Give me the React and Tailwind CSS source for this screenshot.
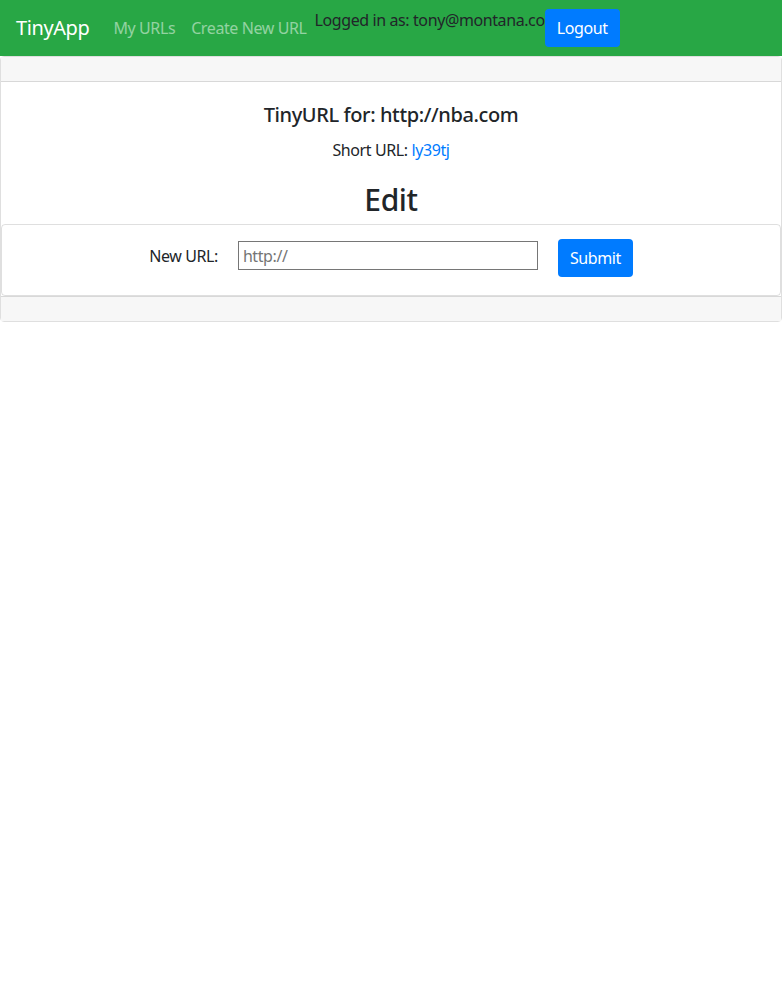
export default function App() {
  return (
    <div className="min-h-[984px] bg-white text-[16px] tracking-[-0.4px] text-[#212529] [font-family:'Noto_Sans',sans-serif]">
      <nav className="flex h-14 items-start bg-[#28a745] px-4">
        <a className="mr-4 mt-[13px] text-[20px] leading-[30px] text-white">TinyApp</a>
        <a className="mt-[16px] px-2 leading-6 text-white/50">My URLs</a>
        <a className="mt-[16px] px-2 leading-6 text-white/50">Create New URL</a>
        <span className="mt-2 leading-6">Logged in as: tony@montana.co</span>
        <button className="mt-[9px] h-[38px] rounded bg-[#007bff] px-3 leading-6 text-white">
          Logout
        </button>
      </nav>

      <div className="flex flex-col rounded border border-black/[.125]">
        <div className="h-[25px] border-b border-black/[.125] bg-[#f7f7f7]" />
        <div className="flex flex-col items-center pt-[21px]">
          <h5 className="text-[20px] font-medium leading-6">TinyURL for: http://nba.com</h5>
          <p className="mt-[11px] leading-6">
            Short URL: <a className="text-[#007bff]">ly39tj</a>
          </p>
          <h2 className="mt-5 text-[30px] font-medium leading-9">Edit</h2>
        </div>
        <div className="mt-[6px] flex h-[72px] items-start justify-center gap-5 rounded border border-black/[.125] pt-[14px]">
          <label className="mt-[5px] leading-6">New URL:</label>
          <input
            className="mt-[2px] h-[29px] w-[300px] border border-[#767676] px-1 text-[16px] placeholder:text-[#757575]"
            placeholder="http://"
          />
          <button className="h-[38px] rounded bg-[#007bff] px-3 leading-6 text-white">Submit</button>
        </div>
        <div className="h-[25px] border-t border-black/[.125] bg-[#f7f7f7]" />
      </div>
    </div>
  )
}
